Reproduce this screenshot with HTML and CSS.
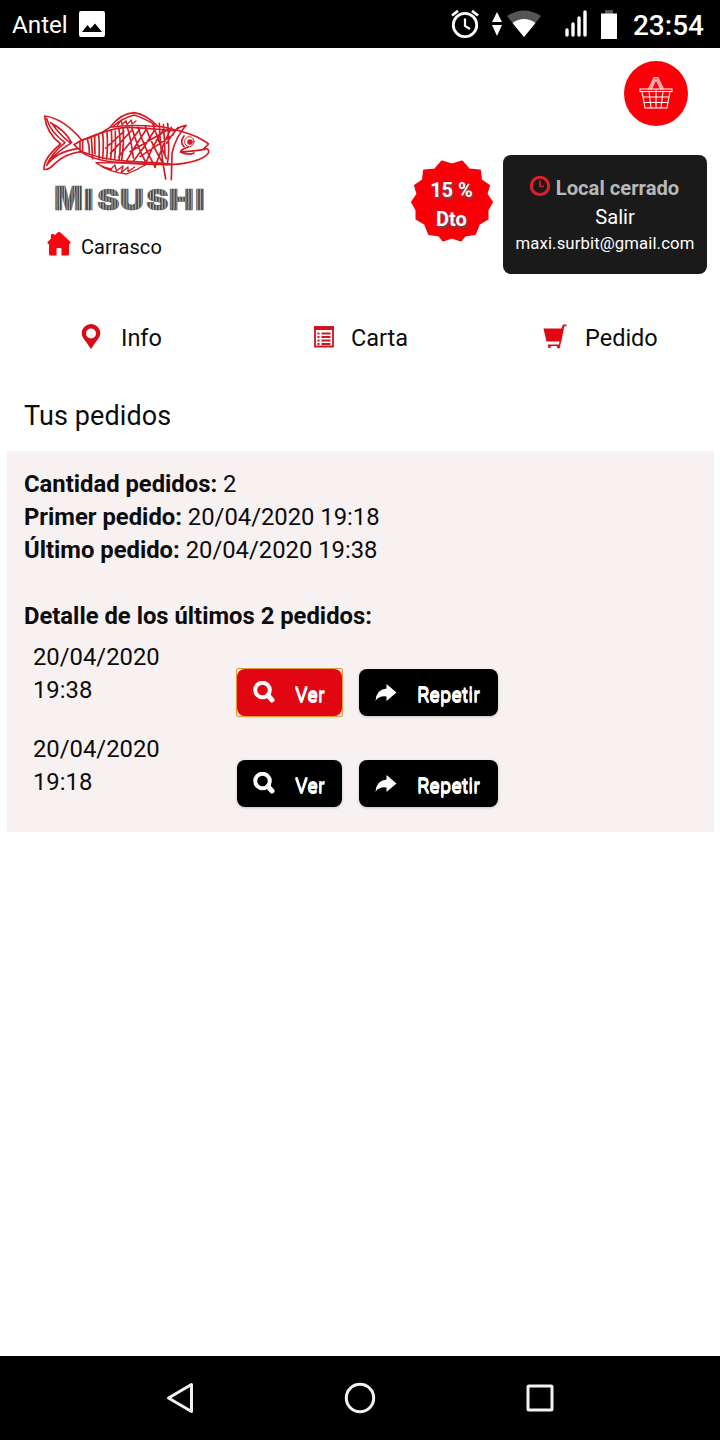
FILE: index.html
```html
<!DOCTYPE html>
<html lang="es">
<head>
<meta charset="utf-8">
<title>Misushi - Tus pedidos</title>
<link rel="stylesheet" href="styles.css">
</head>
<body>
<div class="screen">
  <div class="status">
    <span class="carrier">Antel</span>
    <svg class="photo" width="26" height="26" viewBox="0 0 26 26"><rect width="26" height="26" rx="2" fill="#fff"/><path d="M3 21 8.500 14l3 3.500L16 12.500 23 21z" fill="#000"/></svg>
    <svg class="alarm" width="30" height="30" viewBox="0 0 30 30" fill="none" stroke="#fff"><circle cx="15" cy="16" r="11.700" stroke-width="2.800"/><path d="M2 6.500 8 1.800M22 1.800l6 4.700" stroke-width="2.800"/><path d="M15 9.500V17l5 3" stroke-width="2.200"/></svg>
    <svg class="data" width="12" height="26" viewBox="0 0 12 26" fill="#fff"><path d="M6 1l5 10H1zM1 14h10L6 25z"/></svg>
    <svg class="wifi" width="34" height="28" viewBox="0 0 34 28"><path d="M0 6Q17-5 34 6L17 27z" fill="#555"/><path d="M5.500 13Q17 5 28.500 13L17 27z" fill="#fff"/></svg>
    <svg class="signal" width="22" height="28" viewBox="0 0 22 28" stroke="#fff" stroke-width="3.400" stroke-linecap="round"><path d="M2 20v5M8 14v11M14 8v17M20 2v23"/></svg>
    <svg class="battery" width="16" height="29" viewBox="0 0 16 29"><path d="M4 0h8v4H4z" fill="#555"/><path d="M0 3.500h16V29H0z" fill="#fff"/></svg>
    <span class="time">23:54</span>
  </div>

  <header class="header">
    <div class="brand">
      <svg class="logo" width="174" height="106" viewBox="30 24 522 318">
        <g fill="none" stroke="#d51a24" stroke-width="5" stroke-linecap="round" stroke-linejoin="round">
          <path d="M44 48Q100 55 155 120Q200 110 240 82Q272 40 312 38Q350 44 382 78Q445 88 500 110Q530 126 536 132L522 145Q540 145 535 160Q510 190 420 194Q330 192 270 188Q190 182 152 155Q105 162 75 190Q55 212 42 208Q40 175 92 132Q50 100 44 50"/>
          <path d="M50 56Q60 95 105 128Q65 160 50 196Q80 155 142 146M62 68Q105 90 125 128Q90 150 65 175M68 73Q85 100 120 128M155 120L132 134L155 155M150 125v26M158 122v30"/>
          <path d="M240 82Q300 72 382 80M248 80Q275 55 312 45Q345 55 375 75M262 76l12-16 2 14 12-12 3 12 13-14 2 12 12-9" stroke-width="4"/>
          <path d="M158 120Q250 80 300 82T430 92M156 155Q220 180 300 184T420 192"/>
          <path d="M172 117q7 20 6 42M184 112q2 30 4 64M194 108q0 30 1 54M206 105q3 30 1 72M218 100q4 30 0 76M231 97q3 35-1 80M244 91q3 40-2 88M256 94q2 40-2 84M267 88q7 45 0 94M279 84q4 45-4 96M292 82q12 40 18 92M305 82q15 55 45 110M324 82q18 60 52 120M346 80q25 65 54 112M369 74q18 55 40 102M388 70q1 70 19 167M400 74q4 50 5 90M413 70q7 90-2 125M468 76Q435 115 426 160L424 239M445 82Q418 115 410 130M424 82Q395 140 375 202M400 90Q365 140 345 196M374 90Q345 140 310 184M350 86Q320 130 290 182M329 88Q300 130 266 170M306 90l-65 70M282 94l-55 50M330 170l100-66M300 155l112-65"/>
          <path d="M434 92q18-14 34-15M462 108q-14 18 0 32M525 148Q480 155 452 155Q450 150 474 142M452 157q26 10 40 2"/>
          <path d="M198 188Q275 188 350 192Q325 208 290 222Q235 216 198 188M225 202l18 5 12-12 4 18 20-15-5 20 20-17 0 14 20-14M210 196l35 14" stroke-width="4"/>
          <ellipse cx="478" cy="125" rx="14" ry="15" stroke-width="3"/>
          <circle cx="480" cy="126" r="6" fill="#d51a24"/>
        </g>
        <defs>
          <pattern id="stripes" width="7.500" height="9" patternUnits="userSpaceOnUse"><path d="M0 0h7.500v9H0z" fill="#b4b4b4"/><path d="M0 0h4.500v9H0z" fill="#464646"/></pattern>
        </defs>
        <g class="logo-name" fill="url(#stripes)" stroke="#606060" stroke-width="2">
          <text class="logo-cap" x="73" y="330" textLength="86" lengthAdjust="spacingAndGlyphs">M</text>
          <text transform="scale(1.18 1)" x="136.500 171 228.500 295.500 353 419.500" y="330">ISUSHI</text>
        </g>
      </svg>
      <div class="place">
        <svg width="24" height="24" viewBox="0 0 24 24" fill="#f80510"><path d="M12 0Q13 0 14 1L23.500 10Q24 12 22 12.300V22q0 1.500-1.500 1.500H14.500V17q0-1-1-1h-3q-1 0-1 1v6.500H3.500Q2 23.500 2 22V12.300Q0 12 .5 10L4 6.500V3q0-1 1-1h1.500q1 0 1 1v.5L10 1Q11 0 12 0z"/></svg>
        <span>Carrasco</span>
      </div>
    </div>
    <div class="account">
      <div class="basket">
        <svg width="34" height="34" viewBox="0 0 34 34" fill="none" stroke="#fff" stroke-width="1.100"><path d="M1 13h32v2.500H1zM3 15.500 6 32h22l3-16.500M4 21h26M5 26.500h24M10 15.500 12 32M17 13v19M24 15.500 22 32"/><path d="M9 14 15 1.500h4L25 14M12 14 17 3.500 22 14M10.500 14 16 2.500M23.500 14 18 2.500" stroke="#ffc4c8"/></svg>
      </div>
      <div class="account-row">
        <div class="deal">
          <svg class="burst" width="82" height="82" viewBox="-41 -41 82 82"><path fill="#f90008" stroke="#f90008" stroke-width="2" stroke-linejoin="round" d="M0-36.500 10-39.500 17-31.500 28-30.500 29-21 37-15.500 34.500-7 40 1 35.500 9 35.500 18 27 23 23 33 13 34.500 9 39.500 0 36.500-9 39.500-13 34.500-23 33-27 23-35.500 18-35.500 9-40 1-34.500-7-37-15.500-29-21-28-30.500-17-31.500-10-39.500z"/></svg>
          <span>15 %<br>Dto</span>
        </div>
        <div class="user">
          <div class="closed"><svg width="22" height="22" viewBox="0 0 22 22" fill="none" stroke="#df2027"><circle cx="11" cy="11" r="8.700" stroke-width="3"/><path d="M11 5.500V11.500H15" stroke-width="1.600"/></svg><b>Local cerrado</b></div>
          <div class="logout">Salir</div>
          <div class="email">maxi.surbit@gmail.com</div>
        </div>
      </div>
    </div>
  </header>

  <nav class="tabs">
    <a class="tab"><svg width="20" height="26" viewBox="0 0 20 26"><path fill="#dc0816" fill-rule="evenodd" d="M10 0a9.300 9.300 0 0 1 9.300 9.300C19.300 14 14 18 10.500 24.500H9.500C6 18 .7 14 .7 9.300A9.300 9.300 0 0 1 10 0zm0 4.500a5 5 0 1 0 0 10 5 5 0 0 0 0-10z"/></svg><span>Info</span></a>
    <a class="tab"><svg width="20" height="22" viewBox="0 0 20 22"><path d="M1 1h18v19.500H1z" fill="#fff" stroke="#cc1622" stroke-width="1.800"/><path d="M0 0h20v4H0z" fill="#cc1622"/><path d="M3.500 7.500h2M7.500 7.500h9M3.500 11h2M7.500 11h9M3.500 14.500h2M7.500 14.500h9M3.500 18h2M7.500 18h9" stroke="#cc1622" stroke-width="1.900"/></svg><span>Carta</span></a>
    <a class="tab"><svg width="24" height="26" viewBox="0 0 24 26"><path fill="#e20613" d="M.5 4.500H18.500L20 .5h3.500V2.200H21.300L18.500 16.500 17 22H5V20.500H16L16.500 17.500H3.500z"/><circle cx="6.500" cy="22.500" r="1.600" fill="#c9202b"/><circle cx="15.500" cy="22.800" r="1.800" fill="#c9202b"/></svg><span>Pedido</span></a>
  </nav>

  <main>
    <h1>Tus pedidos</h1>
    <section class="panel">
      <p><b>Cantidad pedidos:</b> 2</p>
      <p><b>Primer pedido:</b> 20/04/2020 19:18</p>
      <p><b>Último pedido:</b> 20/04/2020 19:38</p>
      <p class="detail"><b>Detalle de los últimos 2 pedidos:</b></p>
      <div class="order">
        <div class="date">20/04/2020<br>19:38</div>
        <a class="btn view active"><svg width="22" height="23" viewBox="0 0 22 23" fill="none" stroke="#fff"><circle cx="9.500" cy="9" r="7.300" stroke-width="4"/><path d="M15 14.500l4 4.500" stroke-width="5" stroke-linecap="round"/></svg><span>Ver</span></a>
        <a class="btn repeat"><svg width="22" height="18" viewBox="0 0 22 18" fill="#fff"><path d="M11.500 0 21.500 8.500 11.500 17V12.500Q4 11.500 .5 17Q1 5.500 11.500 4.500z"/></svg><span>Repetir</span></a>
      </div>
      <div class="order">
        <div class="date">20/04/2020<br>19:18</div>
        <a class="btn view"><svg width="22" height="23" viewBox="0 0 22 23" fill="none" stroke="#fff"><circle cx="9.500" cy="9" r="7.300" stroke-width="4"/><path d="M15 14.500l4 4.500" stroke-width="5" stroke-linecap="round"/></svg><span>Ver</span></a>
        <a class="btn repeat"><svg width="22" height="18" viewBox="0 0 22 18" fill="#fff"><path d="M11.500 0 21.500 8.500 11.500 17V12.500Q4 11.500 .5 17Q1 5.500 11.500 4.500z"/></svg><span>Repetir</span></a>
      </div>
    </section>
  </main>

  <div class="navbar">
    <svg width="30" height="32" viewBox="0 0 30 32"><path d="M26.500 2.500v27L3.500 16z" fill="none" stroke="#f2f2f2" stroke-width="3" stroke-linejoin="round"/></svg>
    <svg width="32" height="32" viewBox="0 0 32 32"><circle cx="16" cy="16" r="13.700" fill="none" stroke="#f2f2f2" stroke-width="3"/></svg>
    <svg width="30" height="30" viewBox="0 0 30 30"><rect x="3" y="3" width="24" height="24" rx="1" fill="none" stroke="#f2f2f2" stroke-width="3"/></svg>
  </div>
</div>
</body>
</html>
```
FILE: styles.css
```css
* { box-sizing: border-box; }
body { margin: 0; background: #fff; color: #0c0c0c; font-family: Roboto, "Liberation Sans", sans-serif; font-size: 23.800px; }
svg { display: block; flex: none; }
h1, p { margin: 0; }
.screen { display: flex; flex-direction: column; width: 720px; height: 1440px; }

.status { display: flex; align-items: center; height: 48px; padding: 0 16px 0 12px; background: #000; color: #fff; }
.carrier { width: 67px; padding-top: 2px; font-size: 24.200px; white-space: nowrap; line-height: 46px; }
.alarm { margin-left: auto; }
.data { margin-left: 11px; }
.wifi { margin-left: 4px; }
.signal { margin-left: 24px; }
.battery { margin-left: 14px; }
.time { margin-left: 16px; padding-top: 3px; font-size: 28px; font-weight: 500; line-height: 45px; }

.header { display: flex; justify-content: space-between; height: 246px; padding: 13px 13px 0 40px; }
.brand { padding-top: 47px; }
.logo { overflow: visible; }
.logo-name { font-family: Inter, Roboto, sans-serif; font-weight: 900; font-size: 85px; }
.logo-cap { font-size: 98px; }
.place { display: flex; align-items: center; gap: 10px; height: 28px; margin-top: 17px; padding-left: 7px; font-size: 20px; letter-spacing: .1px; }
.place svg { margin-top: -3px; }
.place span { padding-top: 3px; }
.account { display: flex; flex-direction: column; align-items: flex-end; }
.basket { display: flex; align-items: center; justify-content: center; width: 64px; height: 65px; margin-right: 19px; padding-bottom: 2px; border-radius: 50%; background: #fb0009; }
.account-row { display: flex; gap: 10.500px; margin-top: 29px; }
.deal { position: relative; width: 82px; height: 82px; margin-top: 4.500px; }
.deal span { position: absolute; inset: 16.500px 0 0; color: #fff; font-size: 20px; line-height: 29px; font-weight: 700; text-align: center; text-shadow: 1px 2px 2px #555; }
.user { width: 204px; height: 119px; padding-top: 18px; border-radius: 8px; background: #1a1a1a; color: #fff; text-align: center; }
.closed { display: flex; align-items: center; justify-content: center; gap: 5px; height: 30px; padding-right: 2px; color: #b8b8b8; font-size: 20.200px; white-space: nowrap; }
.closed svg { margin-top: -4px; }
.logout { padding-left: 20px; font-size: 20.200px; line-height: 29px; }
.email { margin-top: -1px; font-size: 16.700px; line-height: 25px; letter-spacing: .12px; }

.tabs { display: flex; height: 86px; padding: 0 0 0 81px; }
.tab { display: flex; align-items: center; height: 86px; gap: 20px; width: 232px; font-size: 23.500px; }
.tab span { padding-top: 2px; }
.tab:nth-child(2) { width: 230px; padding-left: 1px; gap: 17px; }
.tab:nth-child(3) { width: auto; gap: 18px; padding-left: 0; }

h1 { height: 71px; padding: 1px 24px 0; font-size: 27px; font-weight: 400; line-height: 71px; letter-spacing: .1px; }
.panel { height: 381px; margin: 0 6px 0 7px; padding: 17px 17px 0; background: #f7f1f1; line-height: 33px; }
.detail { margin-top: 33px; }
.order { display: flex; height: 91px; padding-left: 9px; }
.date { width: 204px; padding-top: 8px; }
.order + .order .date { padding-top: 9px; }
.btn { display: flex; align-items: center; height: 47px; margin-top: 36px; border-radius: 8px; background: #000; color: #fff; font-size: 20px; line-height: 24px; text-shadow: 0 1px 0 #fff, 0 2px 0 #fff; box-shadow: 0 1px 3px #0003; }
.btn span { padding-top: 2px; }
.view { width: 105px; padding-left: 16px; gap: 20px; }
.repeat { width: 139px; margin-left: 17px; padding-left: 16px; gap: 20px; }
.active { position: relative; background: #e20613; }
.active::before { content: ""; position: absolute; inset: -1px; border: 1.500px solid #e59a32; border-radius: 2px; }

.navbar { display: flex; align-items: center; justify-content: space-between; height: 84px; margin-top: auto; padding: 0 165px; background: #000; }
```
